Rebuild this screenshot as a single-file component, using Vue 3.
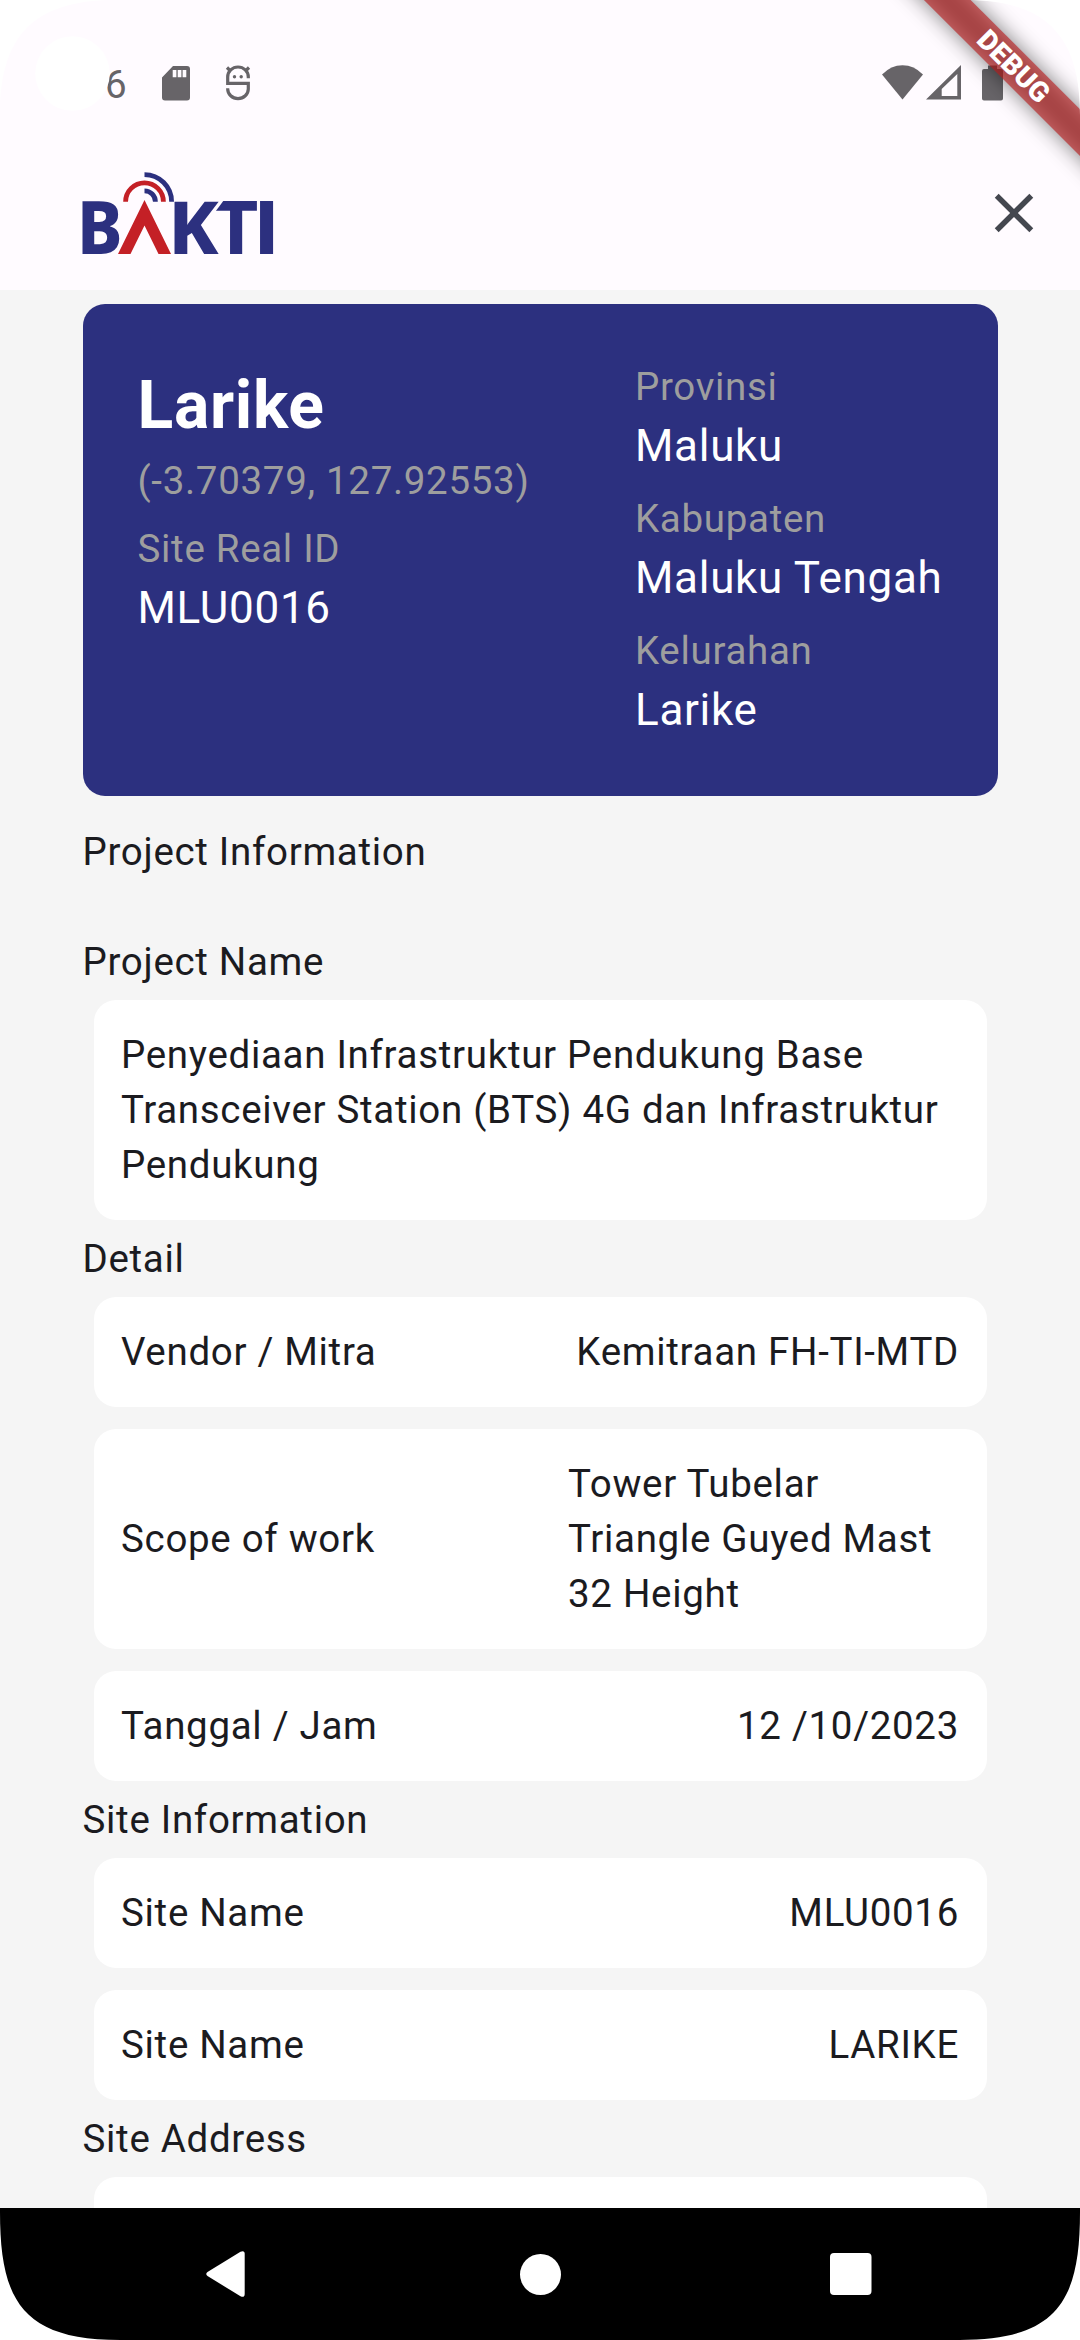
<script setup>
const region = [
  { label: 'Provinsi', value: 'Maluku' },
  { label: 'Kabupaten', value: 'Maluku Tengah' },
  { label: 'Kelurahan', value: 'Larike' },
]

const details = [
  { label: 'Vendor / Mitra', value: 'Kemitraan FH-TI-MTD' },
  { label: 'Scope of work', value: 'Tower Tubelar Triangle Guyed Mast 32 Height', wrap: true },
  { label: 'Tanggal / Jam', value: '12 /10/2023' },
]

const site = [
  { label: 'Site Name', value: 'MLU0016' },
  { label: 'Site Name', value: 'LARIKE' },
]
</script>

<template>
  <div class="screen">
    <div class="status">
      <div class="status-left">
        <span class="clock">6</span>
        <svg class="sd" width="28" height="35" viewBox="0 0 28 35">
          <path fill="#676468" fill-rule="evenodd" d="M11 0H25a3 3 0 0 1 3 3V31.500a3 3 0 0 1-3 3H3a3 3 0 0 1-3-3V11.500ZM10.700 4v7.300h3.700V4ZM15.700 4v7.300h3.700V4ZM20.600 4v7.300h3.700V4Z" />
        </svg>
        <svg class="bug" width="26" height="36" viewBox="0 0 26 36">
          <g fill="none" stroke="#676468" stroke-width="3.200">
            <path d="M23.300 13.300V12a10.300 10 0 0 0-20.600 0v6.300H23.300v5.700a10.300 9.600 0 0 1-20.600 0v-0.700" />
            <path d="M2 2.500 5.500 6M24 2.500 20.500 6" />
          </g>
          <circle cx="9.500" cy="11.700" r="1.700" fill="#676468" />
          <circle cx="16.200" cy="11.700" r="1.700" fill="#676468" />
        </svg>
      </div>
      <div class="status-right">
        <svg width="41" height="35" viewBox="0 0 41 35">
          <path fill="#676468" d="M0 9.500Q9 0.200 20.500 0.200T41 9.500L20.500 34.500Z" />
        </svg>
        <svg class="signal" width="36" height="35" viewBox="0 0 36 35">
          <path fill="#676468" fill-rule="evenodd" d="M0 34.500 35 0V34.500ZM15.700 24V31H31.300V9Z" />
        </svg>
        <svg class="battery" width="21" height="36" viewBox="0 0 21 36">
          <path fill="#676468" d="M6 0.500h9V4h4a2 2 0 0 1 2 2V33.500a2 2 0 0 1-2 2H2a2 2 0 0 1-2-2V6a2 2 0 0 1 2-2h4Z" />
        </svg>
      </div>
    </div>

    <header class="appbar">
      <svg class="logo" width="220" height="110" viewBox="-8 0 220 110" role="img" aria-label="BAKTI">
        <g class="wordmark" fill="#2c307f">
          <text transform="translate(-5 82) scale(0.930 1)">B</text>
          <text class="tee" transform="translate(132.300 82)">T</text>
          <path d="M130 28H142L132 41.400H130Z" fill="#fffbff" />
          <text transform="translate(86.300 82) scale(1.020 1)">K</text>
          <text class="eye" transform="translate(171.500 82) scale(1.220 1)">I</text>
        </g>
        <path fill="#c42026" d="M62.500 28 89 82H76.500L62.500 53.500 48.500 82H36Z" />
        <g fill="none" stroke-width="4.800">
          <path stroke="#c42026" d="M43.600 29.700a18.900 18.900 0 0 1 37.800 0" />
          <path stroke="#2c307f" d="M62.500 18.800a10.900 10.900 0 0 1 10.900 10.900M62.500 2.600a27.100 27.100 0 0 1 27.100 27.100" />
        </g>
      </svg>
      <svg class="close" width="66" height="66" viewBox="0 0 24 24" role="img" aria-label="Close">
        <path fill="#44474f" d="M19 6.410 17.590 5 12 10.590 6.410 5 5 6.410 10.590 12 5 17.590 6.410 19 12 13.410 17.590 19 19 17.590 13.410 12z" />
      </svg>
    </header>

    <main class="content">
      <section class="summary">
        <div>
          <div class="title">Larike</div>
          <div class="muted">(-3.70379, 127.92553)</div>
          <div class="pair">
            <div class="muted">Site Real ID</div>
            <div class="value">MLU0016</div>
          </div>
        </div>
        <div>
          <div v-for="r in region" :key="r.label" class="pair">
            <div class="muted">{{ r.label }}</div>
            <div class="value">{{ r.value }}</div>
          </div>
        </div>
      </section>

      <div class="heading first">Project Information</div>
      <div class="heading second">Project Name</div>
      <div class="cards">
        <div class="card">Penyediaan Infrastruktur Pendukung Base Transceiver Station (BTS) 4G dan Infrastruktur Pendukung</div>
      </div>

      <div class="heading">Detail</div>
      <div class="cards">
        <div v-for="d in details" :key="d.label" class="card row">
          <span>{{ d.label }}</span>
          <span :class="{ wrap: d.wrap }">{{ d.value }}</span>
        </div>
      </div>

      <div class="heading">Site Information</div>
      <div class="cards">
        <div v-for="s in site" :key="s.value" class="card row">
          <span>{{ s.label }}</span>
          <span>{{ s.value }}</span>
        </div>
      </div>

      <div class="heading">Site Address</div>
      <div class="cards">
        <div class="card empty"></div>
      </div>
    </main>

    <nav class="navbar">
      <svg width="40" height="46" viewBox="0 0 40 46">
        <path fill="#fff" d="M1.500 21 34.500 0.700Q38.700-1 38.700 3V43Q38.700 47 34.500 45.300L1.500 25Q-1 23 1.500 21Z" />
      </svg>
      <svg class="home" width="41" height="41" viewBox="0 0 41 41"><circle cx="20.500" cy="20.500" r="20.500" fill="#fff" /></svg>
      <svg width="42" height="42" viewBox="0 0 42 42"><rect width="41.500" height="42" rx="4" fill="#fff" /></svg>
    </nav>

    <div class="banner">
      <div class="banner-shadow"></div>
      <div class="banner-band">DEBUG</div>
    </div>

    <svg class="frame" width="1080" height="2340" viewBox="0 0 1080 2340">
      <g fill="#fff">
        <circle cx="72.500" cy="73.500" r="37.300" />
        <path d="M0 0V115C0 40 30 0 115 0Z" />
        <path d="M1080 0V115C1080 40 1050 0 965 0Z" />
        <path d="M0 2340V2212C0 2300 22 2340 120 2340Z" />
        <path d="M1080 2340V2212C1080 2300 1058 2340 960 2340Z" />
      </g>
    </svg>
  </div>
</template>

<style>
body {
  margin: 0;
}
</style>

<style scoped>
.screen {
  position: relative;
  box-sizing: border-box;
  display: flex;
  flex-direction: column;
  width: 1080px;
  height: 2340px;
  overflow: hidden;
  background: #f5f5f5;
  color: #1b1b1f;
  font-family: Roboto, sans-serif;
  font-size: 38.5px;
  line-height: 55px;
  letter-spacing: 0.6875px;
}
svg {
  display: block;
  flex: none;
}
.status {
  flex: none;
  display: flex;
  justify-content: space-between;
  height: 136px;
  padding: 0 77px 0 105px;
  background: #fffbff;
}
.status-left,
.status-right {
  display: flex;
  align-items: flex-start;
  padding-top: 65px;
}
.clock {
  width: 57px;
  margin-top: -8px;
  color: #676468;
  letter-spacing: 0;
  line-height: 55px;
}
.sd {
  margin-top: 1px;
}
.bug {
  margin-left: 35px;
}
.signal {
  margin-left: 3px;
}
.battery {
  margin-left: 20px;
}
.appbar {
  flex: none;
  box-sizing: border-box;
  display: flex;
  justify-content: space-between;
  align-items: flex-start;
  height: 154px;
  padding: 36px 33px 0 74px;
  background: #fffbff;
}
.close {
  margin-top: 8px;
}
.wordmark {
  font-family: "Noto Sans", sans-serif;
  font-weight: 800;
  font-size: 73.2px;
  letter-spacing: 0;
}
.tee {
  font-family: Lato, sans-serif;
  font-size: 71.8px;
}
.eye {
  font-family: Roboto, sans-serif;
  font-weight: 700;
}
.content {
  flex: 1;
  min-height: 0;
  overflow: hidden;
  padding: 13.75px 82.5px 0;
}
.summary {
  box-sizing: border-box;
  display: flex;
  justify-content: space-between;
  height: 492.25px;
  padding: 55px;
  border-radius: 22px;
  background: #2c307f;
}
.title {
  color: #fff;
  font-size: 66px;
  font-weight: 700;
  line-height: 94.3px;
}
.muted {
  color: #9e9e9e;
}
.value {
  padding-top: 2px;
  color: #fff;
  font-size: 44px;
  line-height: 61.25px;
}
.pair + .pair {
  margin-top: 13.75px;
}
.muted + .pair {
  margin-top: 12.75px;
}
.heading {
  margin: 11px 0;
}
.heading.first {
  margin: 27.5px 0 0;
}
.heading.second {
  margin-top: 55px;
}
.cards {
  display: flex;
  flex-direction: column;
  gap: 22px;
  margin: 0 11px;
}
.card {
  padding: 27.5px;
  border-radius: 22px;
  background: #fff;
}
.row {
  display: flex;
  justify-content: space-between;
  align-items: center;
}
.wrap {
  width: 391px;
}
.empty {
  height: 110px;
}
.navbar {
  flex: none;
  box-sizing: border-box;
  display: flex;
  justify-content: space-between;
  align-items: center;
  height: 132px;
  padding: 0 208px 0 206px;
  background: #000;
}
.home {
  margin-left: 4px;
}
.banner {
  position: absolute;
  left: 1014px;
  top: 66px;
  width: 0;
  height: 0;
  transform: rotate(45deg);
}
.banner-shadow,
.banner-band {
  position: absolute;
  left: -160px;
  top: -16.5px;
  width: 320px;
  height: 33px;
}
.banner-shadow {
  background: rgba(0, 0, 0, 0.5);
  filter: blur(10.5px);
}
.banner-band {
  background: rgba(183, 28, 28, 0.63);
  color: #fff;
  font-size: 28px;
  font-weight: 900;
  line-height: 33px;
  letter-spacing: 0;
  text-align: center;
}
.frame {
  position: absolute;
  inset: 0;
  pointer-events: none;
}
</style>
